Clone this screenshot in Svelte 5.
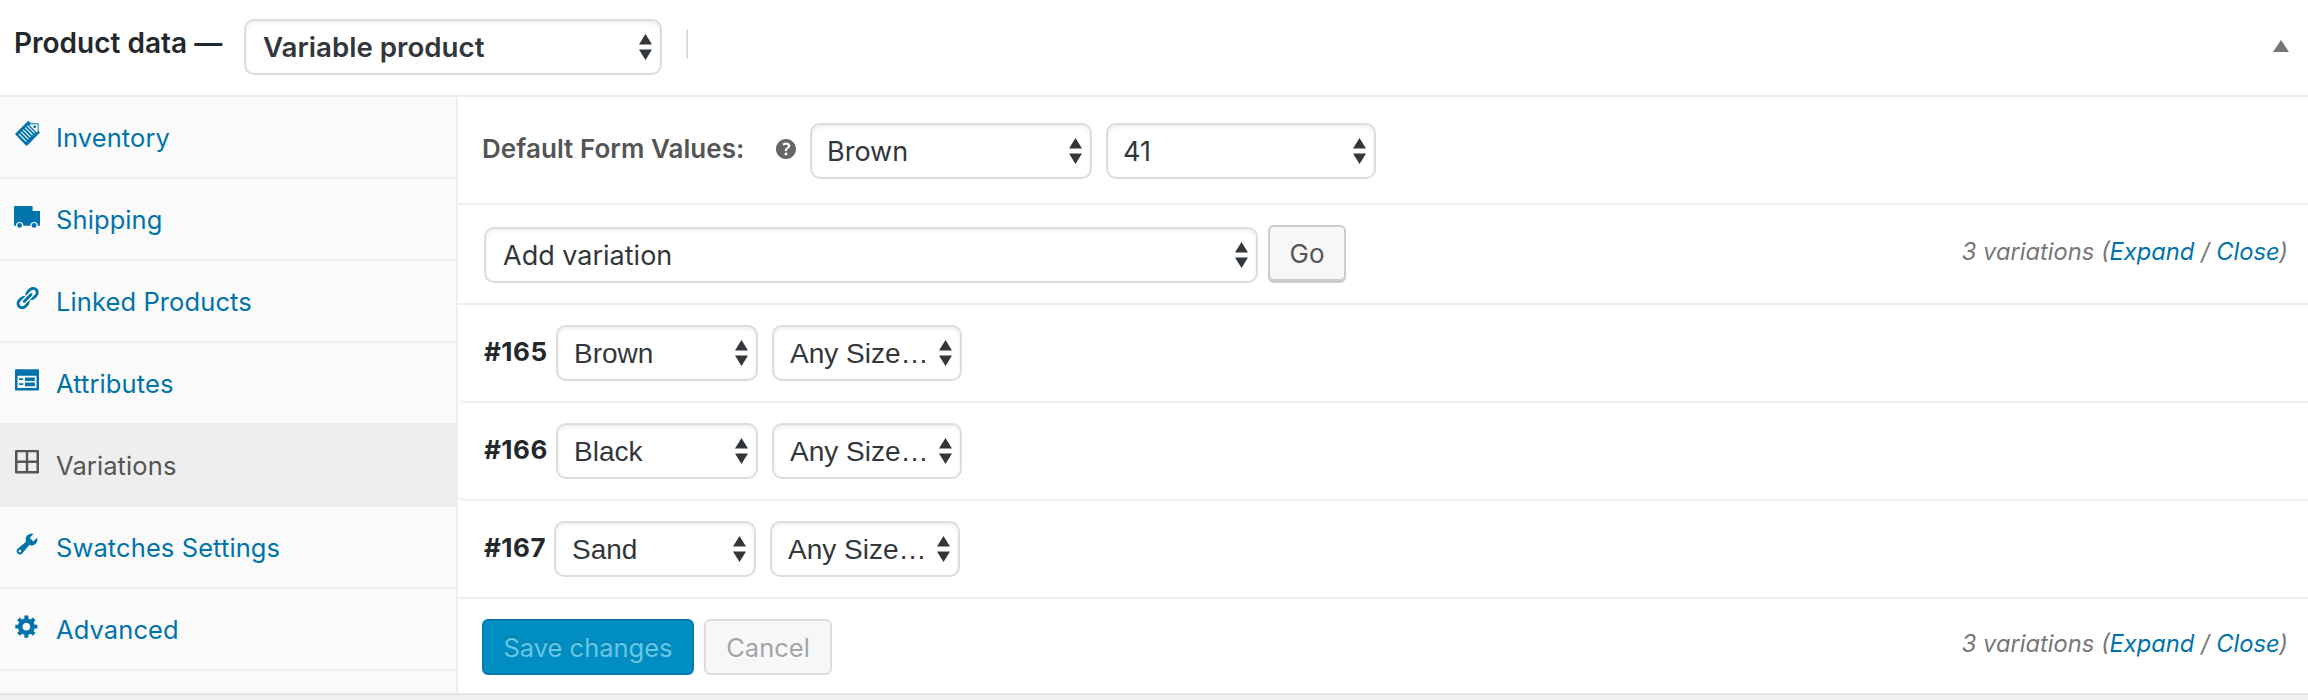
<script>
    const tabs = [
        { id: 'inventory', label: 'Inventory' },
        { id: 'shipping', label: 'Shipping' },
        { id: 'linked', label: 'Linked Products' },
        { id: 'attributes', label: 'Attributes' },
        { id: 'variations', label: 'Variations' },
        { id: 'swatches', label: 'Swatches Settings' },
        { id: 'advanced', label: 'Advanced' },
    ];

    const variations = [
        { id: 165, color: 'Brown' },
        { id: 166, color: 'Black' },
        { id: 167, color: 'Sand' },
    ];

    let activeTab = $state('variations');
</script>

{#snippet dropdown(label, kind)}
    <label class="select {kind}">
        <select>
            <option>{label}</option>
        </select>
        <svg class="arrows" viewBox="0 0 13 26" width="13" height="26">
            <path d="M6.5 0 13 10.5H0zM6.5 26 0 15.5h13z" />
        </svg>
    </label>
{/snippet}

{#snippet count()}
    <span class="count">{variations.length} variations (<a href="#expand">Expand</a> / <a href="#close">Close</a>)</span>
{/snippet}

<div class="postbox">
    <header>
        <h2>Product data —</h2>
        {@render dropdown('Variable product', 'type')}
        <span class="divider"></span>
        <svg class="toggle" viewBox="0 0 16 12" width="16" height="12"><path d="M8 0l8 12H0z" /></svg>
    </header>

    <div class="inside">
        <ul class="tabs">
            {#each tabs as tab}
                <li class:active={activeTab === tab.id}>
                    <button class="tab" onclick={() => (activeTab = tab.id)}>
                        {#if tab.id === 'inventory'}
                            <svg class="icon" viewBox="0 0 26 26">
                                <path d="M1 13 13.500.5q1-.6 2 .2L26 11.500 13.600 24.200q-1 .8-1.900 0z" />
                                <path class="cut" d="M4.900 13l7.300 7.300M7 10.900l7.300 7.300M9.100 8.800l7.300 7.300M11.200 6.700l7.300 7.300M13.300 4.600l7.300 7.300" />
                                <path class="label" d="M15.500 2.800h8.700v7.800l-1.600 1.300-7.300-7.300z" />
                                <circle cx="20.700" cy="5.800" r="1.400" />
                            </svg>
                        {:else if tab.id === 'shipping'}
                            <svg class="icon" viewBox="0 0 26 26">
                                <path d="M1 3h17.6v5H26v14.7h-2.2a3.7 3.7 0 0 0-7.4 0H9.3a3.7 3.7 0 0 0-7.4 0H0V4a1 1 0 0 1 1-1z" />
                                <circle cx="5.6" cy="22.4" r="2.4" />
                                <circle cx="20.1" cy="22.4" r="2.4" />
                            </svg>
                        {:else if tab.id === 'linked'}
                            <svg class="icon" viewBox="0 0 20 20">
                                <path d="M17.74 2.76c1.68 1.69 1.68 4.41 0 6.1l-1.53 1.52c-1.12 1.12-2.7 1.47-4.14 1.09l2.62-2.61.76-.77.76-.76c.84-.84.84-2.2 0-3.04-.84-.85-2.2-.85-3.04 0l-.77.76-3.38 3.38c-.37-1.44-.02-3.02 1.1-4.14l1.52-1.53c1.69-1.68 4.42-1.68 6.1 0zM8.59 13.43l5.34-5.34c.42-.42.42-1.1 0-1.52-.44-.43-1.13-.39-1.53 0l-5.33 5.34c-.42.42-.42 1.1 0 1.52.44.43 1.13.39 1.52 0zm-.76 2.29l4.14-4.15c.38 1.44.03 3.02-1.09 4.14l-1.52 1.53c-1.69 1.68-4.41 1.68-6.1 0-1.68-1.68-1.68-4.42 0-6.1l1.53-1.52c1.12-1.12 2.7-1.47 4.14-1.1l-4.14 4.15c-.85.84-.85 2.2 0 3.05.84.84 2.2.84 3.04 0z" />
                            </svg>
                        {:else if tab.id === 'attributes'}
                            <svg class="icon" viewBox="0 0 26 26">
                                <path fill-rule="evenodd" d="M2 2.3h22a1 1 0 0 1 1 1v19.2a1 1 0 0 1-1 1H2a1 1 0 0 1-1-1V3.300a1 1 0 0 1 1-1zM3.500 8.700v12.300h19V8.700z" />
                                <path d="M5 11.200h4.200v1.700H5zM5 16.300h4.200v1.700H5zM11 10.400h9.800v3.700H11zM11 15.600h9.800v3.700H11z" />
                            </svg>
                        {:else if tab.id === 'variations'}
                            <svg class="icon" viewBox="0 0 26 26">
                                <path fill-rule="evenodd" d="M2 1h22a1 1 0 0 1 1 1v21.500a1 1 0 0 1-1 1H2a1 1 0 0 1-1-1V2a1 1 0 0 1 1-1zM3.500 3.300v8.200h8.300V3.300zM14.200 3.300v8.200h8.300V3.300zM3.500 13.900v8.200h8.300v-8.200zM14.200 13.900v8.200h8.300v-8.200z" />
                            </svg>
                        {:else if tab.id === 'swatches'}
                            <svg class="icon" viewBox="0 0 20 20">
                                <path d="M16.68 9.77c-1.34 1.34-3.3 1.67-4.95.99l-5.41 6.52c-.99.99-2.59.99-3.58 0s-.99-2.59 0-3.57l6.52-5.42c-.68-1.65-.35-3.61.99-4.95 1.28-1.28 3.12-1.62 4.72-1.06l-2.89 2.89 2.82 2.82 2.86-2.87c.53 1.58.18 3.39-1.08 4.65zM3.81 16.21c.4.39 1.04.39 1.43 0 .4-.4.4-1.04 0-1.43-.39-.4-1.03-.4-1.43 0-.39.39-.39 1.03 0 1.43z" />
                            </svg>
                        {:else}
                            <svg class="icon" viewBox="0 0 20 20">
                                <path d="M18 12h-2.180c-.17.7-.44 1.350-.81 1.930l1.540 1.540-2.100 2.100-1.540-1.540c-.58.36-1.230.63-1.910.79V19H8v-2.180c-.68-.16-1.330-.43-1.910-.79l-1.540 1.540-2.120-2.120 1.540-1.540c-.36-.58-.63-1.230-.79-1.910H1V9.030h2.170c.16-.7.44-1.350.8-1.940L2.430 5.550l2.100-2.100 1.540 1.540c.58-.37 1.240-.64 1.930-.81V2h3v2.180c.68.16 1.330.43 1.910.79l1.540-1.540 2.120 2.120-1.540 1.540c.36.59.64 1.240.8 1.940H18V12zm-8.500 1.500c1.660 0 3-1.340 3-3s-1.340-3-3-3-3 1.340-3 3 1.340 3 3 3z" />
                            </svg>
                        {/if}
                        <span>{tab.label}</span>
                    </button>
                </li>
            {/each}
        </ul>

        <div class="panel">
            <div class="row defaults">
                <strong>Default Form Values:</strong>
                <svg class="help" viewBox="3 3 14 14" width="20" height="20">
                    <path d="M17 10c0-3.870-3.140-7-7-7-3.870 0-7 3.130-7 7s3.130 7 7 7c3.860 0 7-3.130 7-7zm-6.300 1.480H9.140v-.43c0-.38.08-.7.24-.98s.46-.57.88-.89c.41-.29.68-.53.81-.71.14-.18.2-.39.2-.62 0-.25-.09-.44-.28-.58-.19-.13-.45-.19-.79-.19-.58 0-1.250.15-2 .46l-.64-1.280c.87-.49 1.800-.74 2.770-.74.81 0 1.450.2 1.920.58.48.39.71.91.71 1.550 0 .43-.09.8-.29 1.110-.19.32-.57.67-1.110 1.060-.38.28-.61.49-.71.63-.1.15-.15.34-.15.57v.35zm-1.470 2.740c-.18-.17-.27-.42-.27-.73 0-.33.08-.58.26-.75s.43-.25.77-.25c.32 0 .57.09.75.26s.27.42.27.74c0 .3-.09.55-.27.72-.18.18-.43.27-.75.27-.33 0-.58-.09-.76-.26z" />
                </svg>
                {@render dropdown('Brown', 'default-color')}
                {@render dropdown('41', 'default-size')}
            </div>

            <div class="row toolbar">
                {@render dropdown('Add variation', 'action')}
                <button class="button go">Go</button>
                {@render count()}
            </div>

            {#each variations as variation}
                <div class="row variation">
                    <strong>#{variation.id}</strong>
                    {@render dropdown(variation.color, 'color')}
                    {@render dropdown('Any Size…', 'size')}
                </div>
            {/each}

            <div class="row footer">
                <button class="button primary" disabled>Save changes</button>
                <button class="button cancel" disabled>Cancel</button>
                {@render count()}
            </div>
        </div>
    </div>
</div>

<style>
    :global(body) {
        margin: 0;
        background: #f1f1f1;
    }

    .postbox {
        box-sizing: border-box;
        height: 695px;
        overflow: hidden;
        background: #fff;
        border-bottom: 2px solid #e5e5e5;
        font-family: Inter, sans-serif;
        font-size: 25.5px;
        color: #23282d;
        box-shadow: 0 2px 2px rgba(0, 0, 0, 0.04);
    }

    header {
        display: flex;
        align-items: center;
        box-sizing: border-box;
        height: 97px;
        padding: 0 19px 1px 14px;
        border-bottom: 2px solid #eee;
    }

    h2 {
        width: 230px;
        margin: 0 0 8px;
        font-size: 28px;
        line-height: 36px;
        font-weight: 600;
        white-space: nowrap;
    }

    .divider {
        width: 2px;
        height: 30px;
        margin: 0 auto 6px 24px;
        background: #ddd;
    }

    .toggle {
        margin-bottom: 3px;
        fill: #72777c;
    }

    .select {
        display: flex;
        align-items: center;
        flex: none;
        box-sizing: border-box;
        height: 56px;
        padding-right: 8px;
        border: 2px solid #ddd;
        border-radius: 10px;
        background: #fff;
        box-shadow: inset 0 2px 4px rgba(0, 0, 0, 0.07);
    }

    .select select {
        flex: 1;
        min-width: 0;
        height: 52px;
        padding: 0 0 0 15px;
        border: 0;
        outline: 0;
        appearance: none;
        background: transparent;
        font: 27px Inter, sans-serif;
        color: #32373c;
    }

    .arrows {
        flex: none;
        fill: #32373c;
    }

    .type {
        width: 418px;
    }

    .type select {
        padding-left: 17px;
        font-size: 27.7px;
        font-weight: 600;
    }

    .default-color {
        width: 282px;
        margin-right: 14px;
    }

    .default-size {
        width: 270px;
    }

    .action {
        width: 774px;
        margin-right: 10px;
    }

    .action select {
        padding-left: 17px;
    }

    .color {
        width: 202px;
        margin-right: 14px;
    }

    .size {
        width: 190px;
    }

    .variation .select select {
        padding-left: 16px;
        font: 28px "Liberation Sans", Arial, sans-serif;
    }

    .inside {
        display: flex;
        height: 596px;
    }

    .tabs {
        flex: none;
        box-sizing: border-box;
        width: 458px;
        margin: 0;
        padding: 0;
        list-style: none;
        background: #fafafa;
        border-right: 2px solid #eee;
    }

    .tabs li {
        height: 80px;
        border-bottom: 2px solid #eee;
    }

    .tab {
        display: flex;
        align-items: center;
        width: 100%;
        height: 80px;
        padding: 0 14px;
        border: 0;
        background: none;
        font: inherit;
        letter-spacing: 0.1px;
        color: #0073aa;
        cursor: pointer;
    }

    .active .tab {
        background: #eee;
        color: #555;
    }

    .icon {
        width: 26px;
        height: 26px;
        margin: 0 16px 6px 0;
        fill: currentColor;
    }

    .cut {
        fill: none;
        stroke: #fafafa;
        stroke-width: 1.1;
    }

    .label {
        fill: #fafafa;
        stroke: currentColor;
        stroke-width: 1;
    }

    .panel {
        flex: 1;
    }

    .row {
        display: flex;
        align-items: center;
        box-sizing: border-box;
        padding: 0 20px 0 26px;
        border-bottom: 2px solid #eee;
    }

    .defaults {
        height: 108px;
        padding-top: 2px;
        padding-left: 24px;
    }

    .defaults strong {
        width: 294px;
        margin-bottom: 5px;
        font-size: 26px;
        font-weight: 600;
        letter-spacing: 0.05px;
        color: #555;
    }

    .help {
        margin: 0 14px 4px 0;
        fill: #666;
    }

    .toolbar {
        height: 100px;
        padding-top: 2px;
    }

    .variation {
        height: 98px;
        border-bottom-left-radius: 6px;
    }

    .variation:nth-last-child(2) {
        border-bottom-left-radius: 0;
    }

    .variation strong {
        width: 72px;
        margin-bottom: 3px;
        font-size: 26px;
        font-weight: 700;
        letter-spacing: 0.5px;
    }

    .variation:nth-last-child(2) strong {
        width: 70px;
    }

    .footer {
        height: 96px;
        padding-left: 24px;
        border-bottom: 0;
    }

    .button {
        box-sizing: border-box;
        height: 56px;
        padding: 0;
        border: 2px solid #ccc;
        border-radius: 6px;
        background: #f7f7f7;
        font: inherit;
        color: #555;
    }

    .go {
        width: 78px;
        margin-bottom: 4px;
        font-size: 26px;
        box-shadow: 0 2px 0 #ccc;
    }

    .primary {
        width: 212px;
        margin-right: 10px;
        border-color: #007cb2;
        background: #008ec2;
        color: #66c6e4;
        text-shadow: 0 -2px 0 rgba(0, 0, 0, 0.1);
    }

    .cancel {
        width: 128px;
        border-color: #ddd;
        color: #a0a5aa;
        text-shadow: 0 2px 0 #fff;
    }

    .count {
        margin: 0 0 7px auto;
        font-size: 23.7px;
        font-style: italic;
        color: #777;
    }

    .count a {
        color: #0073aa;
        text-decoration: none;
    }
</style>
